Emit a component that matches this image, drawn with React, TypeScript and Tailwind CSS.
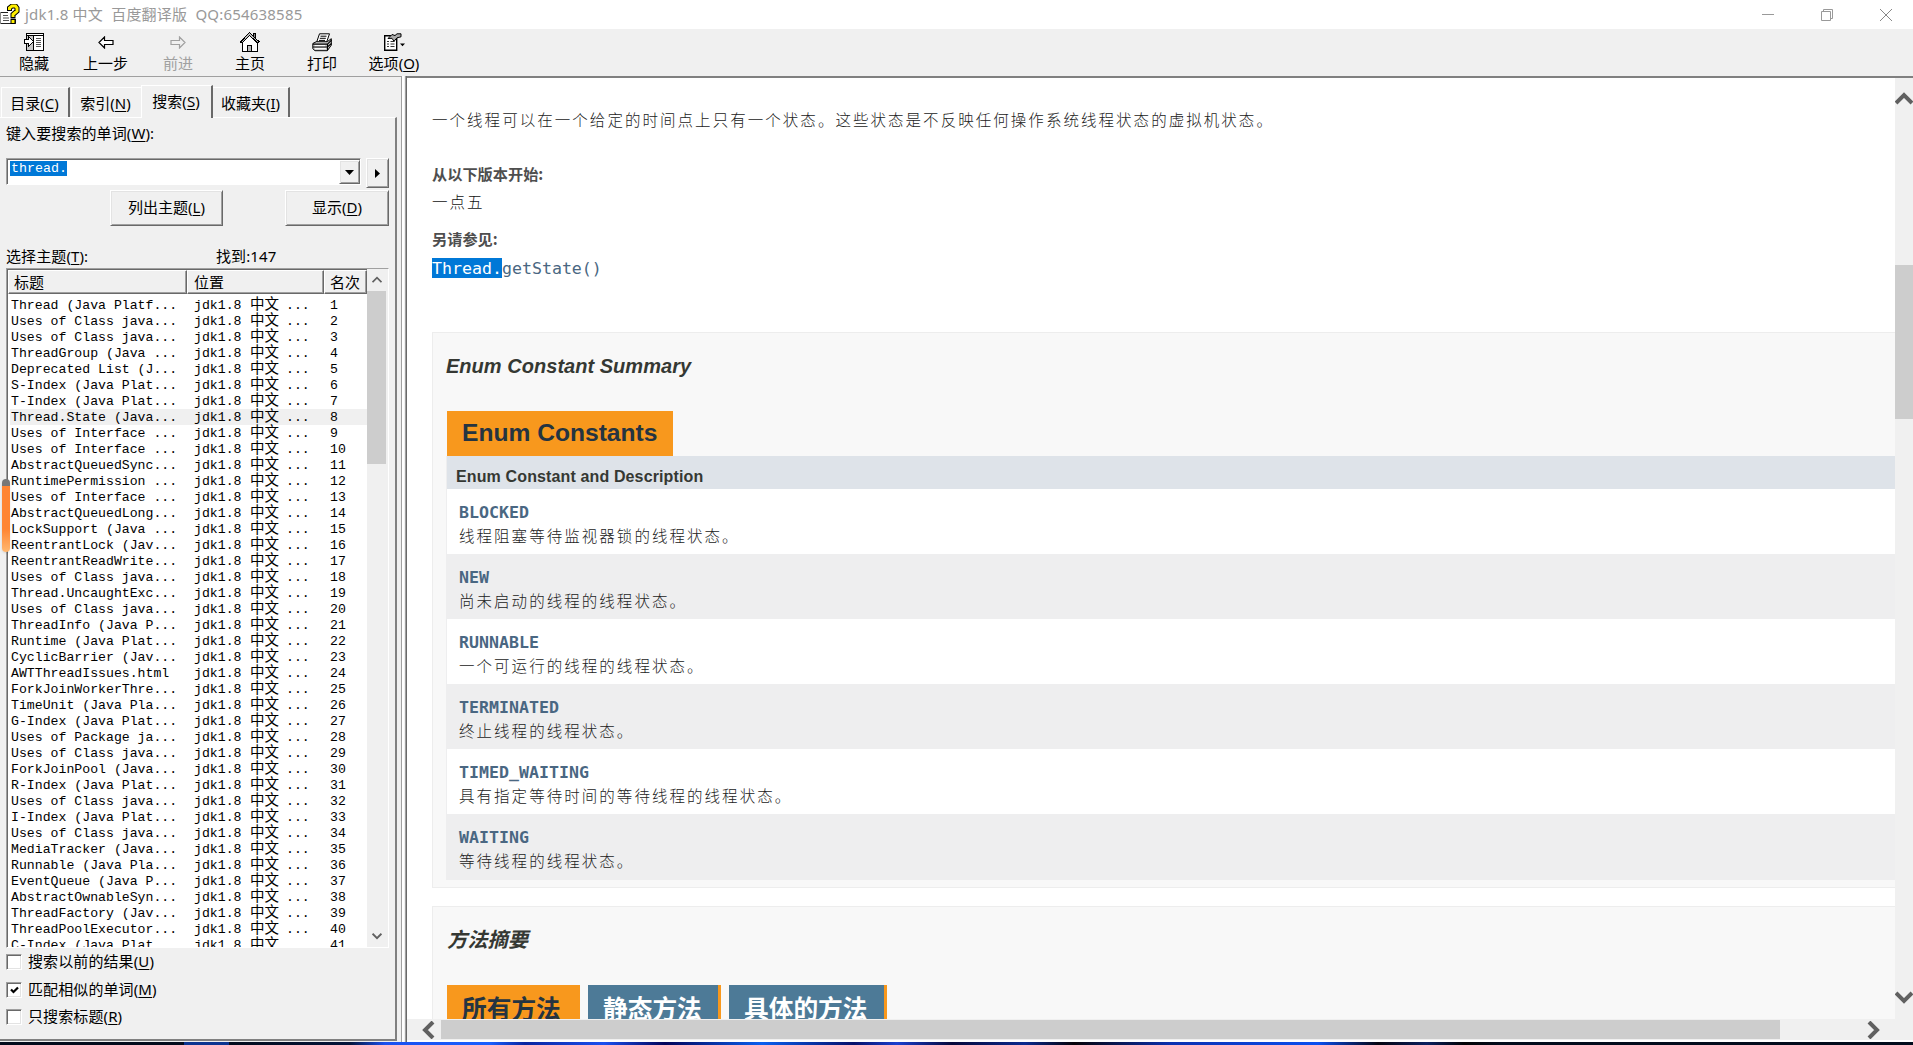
import type { ReactNode } from "react";

const UI = "font-['Noto_Sans','Noto_Sans_CJK_SC',sans-serif]";

const topics = [
  "Thread (Java Platf...",
  "Uses of Class java...",
  "Uses of Class java...",
  "ThreadGroup (Java ...",
  "Deprecated List (J...",
  "S-Index (Java Plat...",
  "T-Index (Java Plat...",
  "Thread.State (Java...",
  "Uses of Interface ...",
  "Uses of Interface ...",
  "AbstractQueuedSync...",
  "RuntimePermission ...",
  "Uses of Interface ...",
  "AbstractQueuedLong...",
  "LockSupport (Java ...",
  "ReentrantLock (Jav...",
  "ReentrantReadWrite...",
  "Uses of Class java...",
  "Thread.UncaughtExc...",
  "Uses of Class java...",
  "ThreadInfo (Java P...",
  "Runtime (Java Plat...",
  "CyclicBarrier (Jav...",
  "AWTThreadIssues.html",
  "ForkJoinWorkerThre...",
  "TimeUnit (Java Pla...",
  "G-Index (Java Plat...",
  "Uses of Package ja...",
  "Uses of Class java...",
  "ForkJoinPool (Java...",
  "R-Index (Java Plat...",
  "Uses of Class java...",
  "I-Index (Java Plat...",
  "Uses of Class java...",
  "MediaTracker (Java...",
  "Runnable (Java Pla...",
  "EventQueue (Java P...",
  "AbstractOwnableSyn...",
  "ThreadFactory (Jav...",
  "ThreadPoolExecutor...",
  "C-Index (Java Plat...",
];

const constants = [
  { name: "BLOCKED", text: "线程阻塞等待监视器锁的线程状态。" },
  { name: "NEW", text: "尚未启动的线程的线程状态。" },
  { name: "RUNNABLE", text: "一个可运行的线程的线程状态。" },
  { name: "TERMINATED", text: "终止线程的线程状态。" },
  { name: "TIMED_WAITING", text: "具有指定等待时间的等待线程的线程状态。" },
  { name: "WAITING", text: "等待线程的线程状态。" },
];

function Hot({ label, k, end = "" }: { label: string; k: string; end?: string }) {
  return (
    <span className="whitespace-nowrap">
      {label}(<span className="underline decoration-1 underline-offset-2">{k}</span>){end}
    </span>
  );
}

function HelpIcon() {
  return (
    <svg width="20" height="21" viewBox="0 0 20 21">
      <path d="M0 8h15v12H0z" fill="#fff" />
      <path d="M0 8.500h8M0 19.500h15.500V15" stroke="#222" fill="none" />
      <path d="M.5 8v12" stroke="#888" />
      <path d="M3 11.500h5M3 14h6M3 16.500h6" stroke="#555" />
      <path d="M9.500 7V4l2.500-2h3.500L17 4v3l-4 3.500v4" fill="none" stroke="#000" strokeWidth="5" />
      <path d="M10.500 15h5v5h-5z" fill="#000" />
      <path d="M9.500 6V4l2.500-2h3.500L17 4v3l-4 3.500v2.500" fill="none" stroke="#ffef00" strokeWidth="3" />
      <path d="M11.500 16h3v3h-3z" fill="#ffef00" />
    </svg>
  );
}

function HideIcon() {
  return (
    <svg width="20" height="18" viewBox="0 0 20 18" shapeRendering="crispEdges">
      <path d="M2.500 .5h17v17h-17z" fill="#fff" stroke="#000" />
      <path d="M3 3h6v14H3z" fill="#c8c8c8" />
      <path d="M3 2.500h16M9.500 3v14" stroke="#000" />
      <path d="M12 5.500h5M12 7.500h5M12 9.500h5M12 11.500h5M12 13.500h5" stroke="#555" />
      <path d="M.5 6.500h4v-3l5 5-5 5v-3h-4z" fill="#fff" stroke="#000" />
    </svg>
  );
}

function ArrowIcon({ right = false, color }: { right?: boolean; color: string }) {
  return (
    <svg width="16" height="13" viewBox="0 0 16 13" className={right ? "-scale-x-100" : ""}>
      <path d="M1 6.500l5.500-5.500v3.500h8.500v4H6.500V12z" fill={right ? "none" : "#fff"} stroke={color} strokeWidth="1.200" />
    </svg>
  );
}

function HomeIcon() {
  return (
    <svg width="20" height="21" viewBox="0 0 20 21" shapeRendering="crispEdges">
      <path d="M13.500 1.500h2v6h-2z" fill="#888" stroke="#000" />
      <path d="M2.500 10v9.500h15V10L10 2.500z" fill="#fff" stroke="#000" />
      <path d="M1 11L9.500 2l9.500 9" fill="none" stroke="#000" strokeWidth="3" />
      <path d="M1.500 10.500L9.500 2l9 8.500" fill="none" stroke="#bbb" />
      <path d="M7.500 19.500v-6h4v6z" fill="#bbb" stroke="#000" />
    </svg>
  );
}

function PrintIcon() {
  return (
    <svg width="21" height="19" viewBox="0 0 21 19">
      <path d="M4.500 9.500L7.500.8h10l-3 8.700z" fill="#fff" stroke="#000" />
      <path d="M8.500 3.200h6M7.800 5.300h6M7 7.400h6" stroke="#000" />
      <path d="M.8 10.500l3.500-1.800h11l4-3v6.500l-4 5.500H3l-2.200-2z" fill="#d0d0d0" stroke="#000" />
      <path d="M1 11.200h14.500l4-4M1 14h14.500l4-3.500M15.500 11v6.500" fill="none" stroke="#000" strokeWidth="1.200" />
      <path d="M3 12.600h10M3 15.600h11" stroke="#fff" />
    </svg>
  );
}

function OptionsIcon() {
  return (
    <svg width="21" height="18" viewBox="0 0 21 18">
      <path d="M.7 2.700h12v14.600H.7z" fill="#fff" stroke="#000" strokeWidth="1.400" />
      <path d="M3 8.500h2M3 11h2M3 13.500h2M6.500 8.500h4M6.500 11h4M6.500 13.500h4" stroke="#333" />
      <path d="M4 5.500L8 1.500l3 1 2-1.700h4v3l-4 1-3 3.500-2-3z" fill="#aaa" stroke="#000" />
      <path d="M16 10.500h5l-2.500 2.700z" fill="#000" />
    </svg>
  );
}

function Chevron({ d, size = 18, width = 4 }: { d: string; size?: number; width?: number }) {
  return (
    <svg width={size} height={size} viewBox="0 0 18 18" className="shrink-0">
      <path d={d} fill="none" stroke="#606060" strokeWidth={width} />
    </svg>
  );
}

const UP = "M1 13L9 5l8 8";
const DOWN = "M1 5l8 8 8-8";
const LEFT = "M13 1L5 9l8 8";
const RIGHT = "M5 1l8 8-8 8";

function Tool({ icon, children, className }: { icon: ReactNode; children: ReactNode; className: string }) {
  return (
    <div className={`flex flex-col items-center ${className}`}>
      <div className="flex h-[25px] items-center justify-center pt-px">{icon}</div>
      <div className="h-5 whitespace-nowrap leading-[19px]">{children}</div>
    </div>
  );
}

function RaisedButton({ className, children }: { className: string; children: ReactNode }) {
  return (
    <div
      className={`flex items-center justify-center border-b border-l border-r border-t border-b-[#696969] border-l-white border-r-[#696969] border-t-white bg-[#f0f0f0] shadow-[inset_1px_1px_0_#e3e3e3,inset_-1px_-1px_0_#a0a0a0] ${className}`}
    >
      {children}
    </div>
  );
}

function Check({ checked = false, className, children }: { checked?: boolean; className: string; children: ReactNode }) {
  return (
    <div className={`flex h-4 items-center ${className}`}>
      <span className="flex h-4 w-4 items-center justify-center border border-b-white border-l-[#a0a0a0] border-r-white border-t-[#a0a0a0] bg-white shadow-[inset_1px_1px_0_#696969,inset_-1px_-1px_0_#e3e3e3]">
        {checked && (
          <svg width="9" height="9" viewBox="0 0 9 9">
            <path d="M1 3.500l2.500 2.500L8 1.500" fill="none" stroke="#000" strokeWidth="2.200" />
          </svg>
        )}
      </span>
      <span className="pb-px pl-1.5 tracking-[0.100px]">{children}</span>
    </div>
  );
}

function HeaderCell({ className, children }: { className: string; children: ReactNode }) {
  return (
    <div
      className={`border-b border-l border-r border-t border-b-[#696969] border-l-white border-r-[#696969] border-t-white bg-[#f0f0f0] leading-[22px] shadow-[inset_-1px_-1px_0_#a0a0a0] ${className}`}
    >
      {children}
    </div>
  );
}

function SearchPanel() {
  return (
    <div className="flex h-[924px] w-[397px] flex-col border-b-2 border-r-2 border-t border-b-[#808080] border-r-[#808080] border-t-white pl-1.5">
      <div className="mt-[5px] h-5 leading-5 tracking-[0.100px]">
        <Hot label="键入要搜索的单词" k="W" end=":" />
      </div>
      <div className="mt-[15px] flex h-[30px] items-start justify-between pr-1.5">
        <div className="flex h-[27px] w-[355px] border border-b-white border-l-[#a0a0a0] border-r-white border-t-[#a0a0a0] bg-white pl-[3px] pt-px shadow-[inset_1px_1px_0_#696969]">
          <div className="mt-px h-[15px] w-[57px] bg-[#0078d7] pl-px font-['Liberation_Mono',monospace] text-[13.300px] leading-[15px] text-white">
            thread.
          </div>
          <RaisedButton className="ml-auto h-[24px] w-[21px]">
            <svg width="9" height="5" viewBox="0 0 9 5">
              <path d="M0 0h9L4.500 5z" />
            </svg>
          </RaisedButton>
        </div>
        <RaisedButton className="h-[30px] w-[23px]">
          <svg width="5" height="9" viewBox="0 0 5 9">
            <path d="M0 0v9l5-4.500z" />
          </svg>
        </RaisedButton>
      </div>
      <div className="mt-[2px] flex justify-between pl-[104px] pr-1.5">
        <RaisedButton className="h-9 w-[113px] pb-px">
          <Hot label="列出主题" k="L" />
        </RaisedButton>
        <RaisedButton className="h-9 w-[104px] pb-px">
          <Hot label="显示" k="D" />
        </RaisedButton>
      </div>
      <div className="mt-[20px] flex h-[22px] leading-5 tracking-[0.100px]">
        <div className="w-[210px]">
          <Hot label="选择主题" k="T" end=":" />
        </div>
        <div>找到:147</div>
      </div>

      <div className="flex h-[680px] w-[383px] overflow-hidden border border-b-white border-l-[#a0a0a0] border-r-white border-t-[#a0a0a0] bg-white">
        <div className="flex w-[360px] flex-col border-l border-t border-[#696969]">
          <div className="flex h-6 shrink-0">
            <HeaderCell className="w-[179px] pl-[5px]">标题</HeaderCell>
            <HeaderCell className="w-[137px] pl-[6px]">位置</HeaderCell>
            <HeaderCell className="w-[43px] pl-[5px]">名次</HeaderCell>
          </div>
          <div className="mt-[3px] pl-[2px] font-['Liberation_Mono','Noto_Sans_CJK_SC',monospace] text-[13.200px] text-black">
            {topics.map((t, i) => (
              <div key={i} className={`flex h-4 whitespace-pre leading-[17px] ${i === 7 ? "bg-[#f0f0f0]" : ""}`}>
                <span className="w-[184px] pl-px">{t}</span>
                <span className="flex w-[136px]">
                  <span className="w-[56px]">jdk1.8</span>
                  <span className="w-[36px] text-[14.500px]">中文</span>
                  <span>...</span>
                </span>
                <span>{i + 1}</span>
              </div>
            ))}
          </div>
        </div>
        <div className="flex w-[21px] flex-col items-center bg-[#f0f0f0] pr-[2px] pt-[6px]">
          <Chevron d={UP} size={10} width={3} />
          <div className="mt-[6px] h-[173px] w-[19px] shrink-0 bg-[#cdcdcd]" />
          <div className="flex-1" />
          <div className="pb-[6px]">
            <Chevron d={DOWN} size={10} width={3.5} />
          </div>
        </div>
      </div>

      <Check className="mt-[6px]">
        <Hot label="搜索以前的结果" k="U" />
      </Check>
      <Check checked className="mt-3">
        <Hot label="匹配相似的单词" k="M" />
      </Check>
      <Check className="mt-[11px]">
        <Hot label="只搜索标题" k="R" />
      </Check>
    </div>
  );
}

function Sidebar() {
  return (
    <div className="flex w-[407px] shrink-0 bg-[#f0f0f0]">
      <div className="w-[401px] border-t border-[#a0a0a0]">
        <div className="flex h-10 items-end pl-px">
          <div className="flex h-[30px] w-[69px] justify-center border-l border-r-2 border-t border-l-white border-r-[#696969] border-t-white pr-px leading-[30px]">
            <Hot label="目录" k="C" />
          </div>
          <div className="ml-px flex h-[30px] w-[70px] justify-center border-l border-t border-white pr-[2px] leading-[30px]">
            <Hot label="索引" k="N" />
          </div>
          <div className="-mb-px flex h-[33px] w-[72px] justify-center border-l border-r-2 border-t border-l-white border-r-[#696969] border-t-white bg-[#f0f0f0] pr-px leading-[30px]">
            <Hot label="搜索" k="S" />
          </div>
          <div className="flex h-[30px] w-[77px] justify-center border-r-2 border-t border-r-[#696969] border-t-white leading-[30px]">
            <Hot label="收藏夹" k="I" />
          </div>
        </div>
        <SearchPanel />
      </div>
      <div className="flex w-[6px] border-l border-[#a0a0a0] bg-[#f0f0f0]">
        <div className="w-[2px] bg-white" />
        <div className="ml-px w-px bg-[#a0a0a0]" />
        <div className="w-px bg-[#696969]" />
      </div>
    </div>
  );
}

const BODY = "font-['Noto_Sans_CJK_SC',sans-serif] font-light text-[15.500px] tracking-[2.040px]";

function EnumSummary() {
  return (
    <section className="mt-[54px] h-[556px] w-[1600px] shrink-0 border border-[#ededed] bg-[#f8f8f8] pl-[13px]">
      <h3 className="h-[78px] pt-[21px] font-['Liberation_Sans',sans-serif] text-[20px] font-bold italic leading-6 tracking-[0.030px] text-[#353833]">
        Enum Constant Summary
      </h3>
      <div className="ml-px h-[45px] w-[226px] bg-[#f8981d] pl-[15px] font-['Liberation_Sans',sans-serif] text-[24.600px] font-bold leading-[43px] text-[#253441]">
        Enum Constants
      </div>
      <div className="border-l border-[#eeeeef]">
        <div className="h-[33px] bg-[#dee3e9] pl-[9px] pt-px font-['Liberation_Sans',sans-serif] text-[16px] font-bold leading-[39px] tracking-[0.130px] text-[#353833]">
          Enum Constant and Description
        </div>
        {constants.map((c, i) => (
          <div key={c.name} className={`h-[65px] pl-3 pt-3 last:h-[66px] ${i % 2 ? "bg-[#eeeeef]" : "bg-white"}`}>
            <div className="h-[22px] font-['DejaVu_Sans_Mono',monospace] text-[16.600px] font-bold leading-6 text-[#4a6782]">
              {c.name}
            </div>
            <div className={`h-6 leading-6 text-[#222] ${BODY}`}>{c.text}</div>
          </div>
        ))}
      </div>
    </section>
  );
}

function MethodSummary() {
  const tab = "flex h-[45px] items-start pl-[15px] leading-[45px]";
  return (
    <section className="mt-[18px] h-[200px] w-[1600px] shrink-0 border border-[#ededed] bg-[#f8f8f8] pl-[14px] font-['Noto_Sans_CJK_SC',sans-serif] font-bold">
      <h3 className="h-[78px] pt-[19px] text-[20.300px] italic leading-6 text-[#353833]">方法摘要</h3>
      <div className="flex gap-2 text-[24.700px]">
        <div className={`${tab} w-[133px] bg-[#f8981d] text-[#253441]`}>所有方法</div>
        <div className={`${tab} w-[133px] border-r-[3px] border-[#f8981d] bg-[#4d7a97] text-white`}>静态方法</div>
        <div className={`${tab} w-[158px] border-r-[3px] border-[#f8981d] bg-[#4d7a97] text-white`}>具体的方法</div>
      </div>
    </section>
  );
}

function DocPane() {
  return (
    <div className="flex min-w-0 flex-1 flex-col border-t-2 border-[#808080] bg-white">
      <div className="flex h-[941px]">
        <div className="flex min-w-0 flex-1 flex-col overflow-hidden pl-[25px]">
          <p className={`mt-[29px] h-6 whitespace-nowrap leading-6 text-[#222] ${BODY}`}>
            一个线程可以在一个给定的时间点上只有一个状态。这些状态是不反映任何操作系统线程状态的虚拟机状态。
          </p>
          <div className="mt-[30px] h-6 font-['Noto_Sans_CJK_SC',sans-serif] text-[15.200px] font-bold leading-6 text-[#4e4e4e]">
            从以下版本开始:
          </div>
          <div className={`mt-1 h-6 leading-6 text-[#111] ${BODY}`}>一点五</div>
          <div className="mt-[13px] h-6 font-['Noto_Sans_CJK_SC',sans-serif] text-[15.200px] font-bold leading-6 text-[#4e4e4e]">
            另请参见:
          </div>
          <div className="mt-2 flex h-5 font-['DejaVu_Sans_Mono',monospace] text-[16.600px] leading-[22px] text-[#4a6782]">
            <span className="bg-[#0078d7] text-white">Thread.</span>
            <span>getState()</span>
          </div>
          <EnumSummary />
          <MethodSummary />
        </div>
        <div className="flex w-[18px] flex-col items-center bg-[#f0f0f0] pt-3">
          <Chevron d={UP} />
          <div className="mt-[157px] h-[154px] w-full bg-[#cdcdcd]" />
          <div className="flex-1" />
          <div className="pb-[13px]">
            <Chevron d={DOWN} />
          </div>
        </div>
      </div>
      <div className="flex h-[23px] items-center border-b-2 border-white bg-[#f0f0f0] pl-[13px] pr-[31px]">
        <Chevron d={LEFT} />
        <div className="ml-[3px] h-[19px] w-[1339px] bg-[#cdcdcd]" />
        <div className="flex-1" />
        <Chevron d={RIGHT} />
      </div>
    </div>
  );
}

export default function App() {
  return (
    <div className={`relative flex h-[1045px] w-[1913px] flex-col overflow-hidden bg-[#f0f0f0] text-[15px] text-black ${UI}`}>
      <header className="flex h-[29px] shrink-0 items-center bg-white text-[#999]">
        <HelpIcon />
        <span className="whitespace-pre pl-[5px] tracking-[0.200px]">jdk1.8 中文  百度翻译版  QQ:654638585</span>
        <div className="ml-auto flex items-center gap-[47px] pr-[21px]">
          <svg width="12" height="12" viewBox="0 0 12 12">
            <path d="M0 5.500h12" stroke="#999" />
          </svg>
          <svg width="12" height="12" viewBox="0 0 12 12" fill="none" stroke="#999">
            <path d="M.5 2.500h9v9h-9zM2.500 2.500v-2h9v9h-2" />
          </svg>
          <svg width="12" height="12" viewBox="0 0 12 12" stroke="#888">
            <path d="M0 0l12 12M12 0L0 12" />
          </svg>
        </div>
      </header>

      <nav className="flex h-[47px] shrink-0 pl-[5px]">
        <Tool className="w-[58px]" icon={<HideIcon />}>隐藏</Tool>
        <Tool className="w-[85px]" icon={<ArrowIcon color="#000" />}>上一步</Tool>
        <Tool className="w-[60px] text-[#a0a0a0]" icon={<ArrowIcon right color="#a0a0a0" />}>前进</Tool>
        <Tool className="w-[84px]" icon={<HomeIcon />}>主页</Tool>
        <Tool className="w-[60px]" icon={<PrintIcon />}>打印</Tool>
        <Tool className="w-[84px]" icon={<OptionsIcon />}>
          <Hot label="选项" k="O" />
        </Tool>
      </nav>

      <main className="flex h-[966px] shrink-0">
        <Sidebar />
        <DocPane />
      </main>

      <footer className="h-[3px] shrink-0 bg-[linear-gradient(90deg,#020b1c_0_184px,#0b3490_184px_229px,#020b1c_229px,#03143a_350px,#1a50f0_385px,#1a60ff_490px,#0a25a0_525px,#1a50f0_604px,#02045a_665px,#0a60f0_762px,#06106a_854px,#1a40d0_897px,#06083a_952px,#0a2a90_1025px,#060208_1074px,#0a30b0_1171px,#0a50f0_1318px,#050410_1378px,#0a2060_1427px,#020204_1464px,#020b1c_1500px)]" />

      {/* floating dock handle on the left edge */}
      <div className="absolute left-[2px] top-[479px] h-[73px] w-2 rounded-full bg-[linear-gradient(180deg,#777_0_7px,#ff8533_7px_50px,#ffb870)] shadow" />
    </div>
  );
}
